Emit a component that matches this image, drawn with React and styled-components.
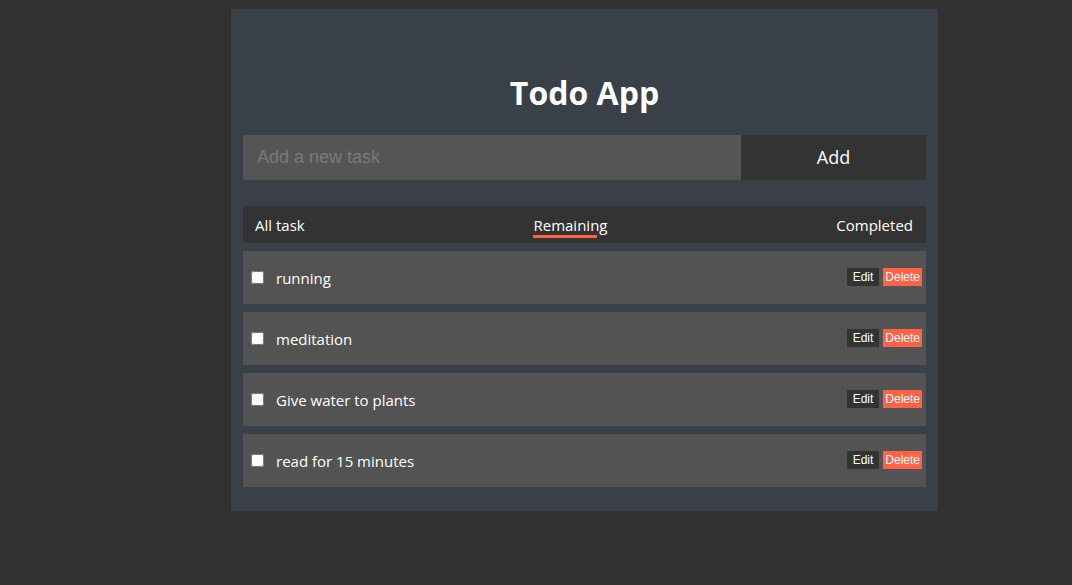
import React from 'react';
import styled, { createGlobalStyle } from 'styled-components';

const GlobalStyle = createGlobalStyle`
    body {
        margin: 0;
        background: #313131;
        font-family: "Open Sans", "Noto Sans", sans-serif;
    }
`;

const Page = styled.div`
    padding: 9px 0 0 231px;
    min-height: 576px;
`;

const Container = styled.main`
    width: 707px;
    box-sizing: border-box;
    background: #394047;
    padding: 64px 12px 24px;
`;

const Title = styled.h1`
    margin: 0 0 22px;
    line-height: 40px;
    font-size: 32px;
    font-weight: 700;
    color: #fff;
    text-align: center;
`;

const Form = styled.form`
    display: flex;
    height: 45px;
`;

const TaskInput = styled.input`
    flex: 1;
    border: none;
    outline: none;
    background: #555555;
    color: #fff;
    padding: 0 14px;
    font-family: "Liberation Sans", Arial, sans-serif;
    font-size: 18px;

    &::placeholder {
        color: #7a7a7a;
    }
`;

const AddButton = styled.button`
    width: 185px;
    border: none;
    background: #333333;
    color: #fff;
    font-family: "Open Sans", "Noto Sans", sans-serif;
    font-size: 18px;
    padding-bottom: 2px;
    cursor: pointer;
`;

const Filters = styled.nav`
    display: flex;
    justify-content: space-between;
    align-items: center;
    height: 37px;
    margin-top: 26px;
    padding: 0 13px 0 12px;
    background: #333333;
`;

const Filter = styled.span`
    position: relative;
    color: #fff;
    font-size: 15px;
    cursor: pointer;

    ${p => p.$active && `
        &::after {
            content: "";
            position: absolute;
            left: 0;
            bottom: -3px;
            width: 86%;
            height: 3px;
            background: #ff6347;
        }
    `}
`;

const List = styled.ul`
    list-style: none;
    margin: 8px 0 0;
    padding: 0;
    display: flex;
    flex-direction: column;
    gap: 8px;
`;

const Item = styled.li`
    display: flex;
    align-items: center;
    height: 53px;
    padding: 0 4px 0 8px;
    background: #535353;
`;

const Check = styled.input`
    width: 13px;
    height: 13px;
    margin: 0 12px 0 0;
`;

const Label = styled.span`
    flex: 1;
    color: #fff;
    font-size: 15px;
`;

const Actions = styled.div`
    display: flex;
    gap: 4px;
    margin-top: -1px;
`;

const SmallButton = styled.button`
    border: none;
    height: 18px;
    padding: 0 ${p => (p.$danger ? '2px' : '6px')};
    font-family: "Liberation Sans", Arial, sans-serif;
    font-size: 12px;
    color: #fff;
    background: ${p => (p.$danger ? '#ff6347' : '#333333')};
    cursor: pointer;
`;

const tasks = ['running', 'meditation', 'Give water to plants', 'read for 15 minutes'];

export default function App() {
    return (
        <Page>
            <GlobalStyle />
            <Container>
                <Title>Todo App</Title>
                <Form onSubmit={e => e.preventDefault()}>
                    <TaskInput placeholder="Add a new task" />
                    <AddButton type="submit">Add</AddButton>
                </Form>
                <Filters>
                    <Filter>All task</Filter>
                    <Filter $active>Remaining</Filter>
                    <Filter>Completed</Filter>
                </Filters>
                <List>
                    {tasks.map(t => (
                        <Item key={t}>
                            <Check type="checkbox" />
                            <Label>{t}</Label>
                            <Actions>
                                <SmallButton>Edit</SmallButton>
                                <SmallButton $danger>Delete</SmallButton>
                            </Actions>
                        </Item>
                    ))}
                </List>
            </Container>
        </Page>
    );
}
